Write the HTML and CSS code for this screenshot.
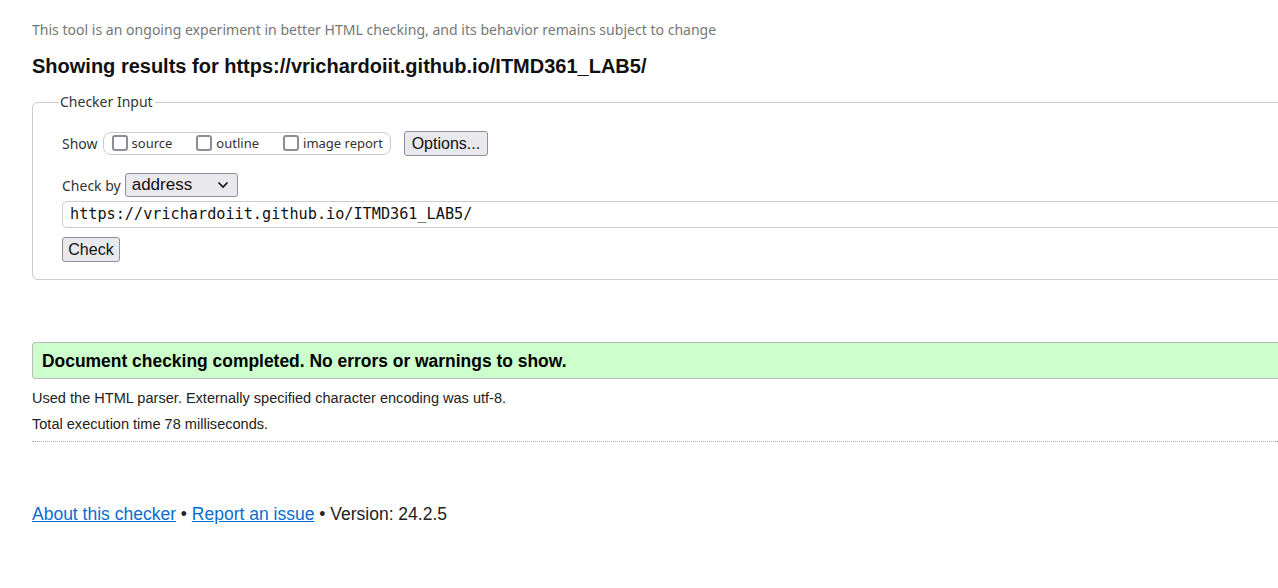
FILE: index.html
```html
<!DOCTYPE html>
<html lang="en">
<head>
<meta charset="utf-8">
<title>Nu Html Checker</title>
<link rel="stylesheet" href="styles.css">
</head>
<body>
<div class="page">
  <p class="intro">This tool is an ongoing experiment in better HTML checking, and its behavior remains subject to change</p>
  <h1 class="title">Showing results for https://vrichardoiit.github.io/ITMD361_LAB5/</h1>
  <fieldset class="checker">
    <legend class="legend">Checker Input</legend>
    <div class="row show-row">
      <span class="lbl">Show</span>
      <div class="group">
        <label class="opt"><input type="checkbox" class="cb"><span>source</span></label>
        <label class="opt"><input type="checkbox" class="cb"><span>outline</span></label>
        <label class="opt"><input type="checkbox" class="cb"><span>image report</span></label>
      </div>
      <button class="btn btn-options" type="button">Options...</button>
    </div>
    <div class="row by-row">
      <span class="lbl">Check by</span>
      <div class="select">
        <span>address</span>
        <svg class="chev" width="12" height="8" viewBox="0 0 12 8"><path d="M1.5 1.5 L6 6 L10.5 1.5" fill="none" stroke="#111" stroke-width="1.6"/></svg>
      </div>
    </div>
    <div class="url">https://vrichardoiit.github.io/ITMD361_LAB5/</div>
    <button class="btn btn-check" type="button">Check</button>
  </fieldset>
  <div class="success">Document checking completed. No errors or warnings to show.</div>
  <p class="info">Used the HTML parser. Externally specified character encoding was utf-8.</p>
  <p class="info info2">Total execution time 78 milliseconds.</p>
  <div class="footer">
    <a href="#" class="link">About this checker</a> • <a href="#" class="link">Report an issue</a> • Version: 24.2.5
  </div>
</div>
</body>
</html>
```
FILE: styles.css
```css
html { overflow: hidden; background: #fff; }
body { margin: 0; }
.page {
  padding-left: 32px;
  width: 1320px;
  font-family: "Liberation Sans", Arial, sans-serif;
  color: #222;
}
.intro {
  margin: 20px 0 0;
  font-family: "Noto Sans", sans-serif;
  font-size: 14.05px;
  line-height: 20px;
  color: #777;
}
.title {
  margin: 14px 0 0;
  font-size: 20px;
  line-height: 24px;
  font-weight: bold;
  color: #111;
}
.checker {
  margin: 14px 0 0;
  border: 1px solid #ccc;
  border-radius: 6px;
  padding: 18px 0 17px 29px;
  min-width: 0;
}
.legend {
  margin-left: -4px;
  padding: 0 2px;
  font-family: "Noto Sans", sans-serif;
  font-size: 14px;
  line-height: 20px;
  color: #333;
}
.row { display: flex; align-items: center; }
.lbl {
  font-family: "Noto Sans", sans-serif;
  font-size: 14px;
  color: #333;
}
.show-row { height: 26px; }
.show-row .lbl { margin-right: 5px; }
.group {
  display: flex;
  align-items: center;
  height: 21px;
  border: 1px solid #ccc;
  border-radius: 8px;
  padding: 0 7px 0 8px;
  gap: 24px;
}
.opt {
  display: flex;
  align-items: center;
  font-family: "Noto Sans", sans-serif;
  font-size: 13px;
  color: #333;
}
.cb {
  appearance: none;
  -webkit-appearance: none;
  width: 16px;
  height: 16px;
  margin: 0 4px 0 0;
  border: 2px solid #8d8d98;
  border-radius: 3px;
  background: #fff;
  box-sizing: border-box;
}
.btn {
  font-family: "Liberation Sans", Arial, sans-serif;
  font-size: 16px;
  color: #111;
  background: #e9e9ed;
  border: 1px solid #8f8f9d;
  border-radius: 3px;
  padding: 0 6px;
  height: 25px;
  line-height: 23px;
}
.btn-options { margin-left: 13px; width: 84px; }
.by-row { margin-top: 17px; height: 24px; }
.by-row .lbl { margin-right: 4px; }
.select {
  box-sizing: border-box;
  width: 113px;
  height: 24px;
  display: flex;
  align-items: center;
  justify-content: space-between;
  padding: 0 8px 0 6px;
  background: #e9e9ed;
  border: 1px solid #8f8f9d;
  border-radius: 3px;
  font-size: 17px;
  color: #111;
}
.url {
  margin-top: 4px;
  box-sizing: border-box;
  height: 27px;
  border: 1px solid #ccc;
  border-right: 0;
  border-radius: 5px 0 0 5px;
  padding-left: 7px;
  font-family: "DejaVu Sans Mono", "Liberation Mono", monospace;
  font-size: 15.2px;
  line-height: 25px;
  color: #111;
}
.btn-check { display: block; margin-top: 9px; width: 58px; height: 25px; padding: 0; }
.success {
  margin-top: 62px;
  box-sizing: border-box;
  height: 37px;
  background: #ccffcc;
  border: 1px solid #bbb;
  border-right: 0;
  border-radius: 4px 0 0 4px;
  padding-left: 9px;
  font-size: 17.45px;
  font-weight: bold;
  line-height: 36px;
  color: #000;
}
.info {
  margin: 9px 0 0;
  font-size: 14.55px;
  line-height: 20px;
  color: #222;
}
.info2 {
  margin-top: 6px;
  padding-bottom: 7px;
  border-bottom: 1px dotted #aaa;
}
.footer {
  margin-top: 61px;
  font-size: 17.5px;
  line-height: 22px;
  color: #222;
}
.link { color: #0a6cd0; text-decoration: underline; }
```
